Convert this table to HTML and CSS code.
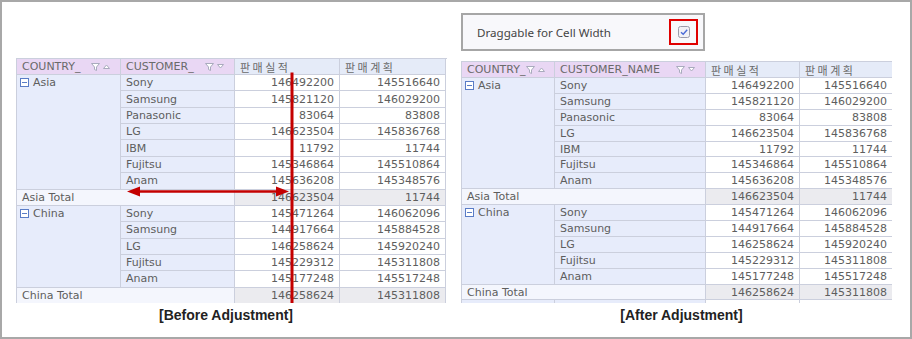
FILE: index.html
```html
<!DOCTYPE html>
<html>
<head>
<meta charset="UTF-8">
<title>Draggable for Cell Width</title>
<link rel="stylesheet" href="styles.css">
</head>
<body>
<div class="frame">
	<div class="panel before">
		<div class="gridWrap">
			<div class="grid left">
				<div class="hd dim">COUNTRY_<span class="icons"><svg class="funnel" viewBox="0 0 9 8"><path d="M0.5 0.5h8L5.5 4v3.5L3.5 6.5V4z"/></svg><svg class="sort" viewBox="0 0 7 5"><path d="M0.5 4.5L3.5 1L6.5 4.5z"/></svg></span></div>
				<div class="hd dim">CUSTOMER_<span class="icons"><svg class="funnel" viewBox="0 0 9 8"><path d="M0.5 0.5h8L5.5 4v3.5L3.5 6.5V4z"/></svg><svg class="sort" viewBox="0 0 7 5"><path d="M0.5 0.5L3.5 4L6.5 0.5z"/></svg></span></div>
				<div class="hd measure">판매실적</div>
				<div class="hd measure">판매계획</div>

				<div class="country asia"><span class="label"><svg class="expand" viewBox="0 0 9 9"><rect x="0.5" y="0.5" width="8" height="8"/><path d="M2 4.5h5"/></svg>Asia</span></div>
				<div class="cust">Sony</div><div class="num">146492200</div><div class="num">145516640</div>
				<div class="cust">Samsung</div><div class="num">145821120</div><div class="num">146029200</div>
				<div class="cust">Panasonic</div><div class="num">83064</div><div class="num">83808</div>
				<div class="cust">LG</div><div class="num">146623504</div><div class="num">145836768</div>
				<div class="cust">IBM</div><div class="num">11792</div><div class="num">11744</div>
				<div class="cust">Fujitsu</div><div class="num">145346864</div><div class="num">145510864</div>
				<div class="cust">Anam</div><div class="num">145636208</div><div class="num">145348576</div>
				<div class="total">Asia Total</div><div class="num sum">146623504</div><div class="num sum">11744</div>

				<div class="country china"><span class="label"><svg class="expand" viewBox="0 0 9 9"><rect x="0.5" y="0.5" width="8" height="8"/><path d="M2 4.5h5"/></svg>China</span></div>
				<div class="cust">Sony</div><div class="num">145471264</div><div class="num">146062096</div>
				<div class="cust">Samsung</div><div class="num">144917664</div><div class="num">145884528</div>
				<div class="cust">LG</div><div class="num">146258624</div><div class="num">145920240</div>
				<div class="cust">Fujitsu</div><div class="num">145229312</div><div class="num">145311808</div>
				<div class="cust">Anam</div><div class="num">145177248</div><div class="num">145517248</div>
				<div class="total">China Total</div><div class="num sum">146258624</div><div class="num sum">145311808</div>
				<div class="country"></div><div class="cust"></div><div class="num"></div><div class="num"></div>
			</div>
			<svg class="marks" viewBox="0 0 431 245">
				<rect x="274.5" y="14.5" width="3" height="231" fill="#c40000"/>
				<path d="M121 133.5H263" stroke="#c40000" stroke-width="2.4"/>
				<path d="M111 133.5L124 128.5V138.5z" fill="#c40000"/>
				<path d="M273 133.5L260 128.5V138.5z" fill="#c40000"/>
			</svg>
		</div>
		<p class="caption">[Before Adjustment]</p>
	</div>

	<div class="panel after">
		<div class="option">
			<span>Draggable for Cell Width</span>
			<span class="highlight"><svg class="check" viewBox="0 0 12 12"><rect x="0.5" y="0.5" width="11" height="11" rx="2"/><path d="M3 6.2L5.2 8.3L9.2 3.8"/></svg></span>
		</div>
		<div class="gridWrap">
			<div class="grid right">
				<div class="hd dim">COUNTRY_<span class="icons"><svg class="funnel" viewBox="0 0 9 8"><path d="M0.5 0.5h8L5.5 4v3.5L3.5 6.5V4z"/></svg><svg class="sort" viewBox="0 0 7 5"><path d="M0.5 4.5L3.5 1L6.5 4.5z"/></svg></span></div>
				<div class="hd dim">CUSTOMER_NAME<span class="icons"><svg class="funnel" viewBox="0 0 9 8"><path d="M0.5 0.5h8L5.5 4v3.5L3.5 6.5V4z"/></svg><svg class="sort" viewBox="0 0 7 5"><path d="M0.5 0.5L3.5 4L6.5 0.5z"/></svg></span></div>
				<div class="hd measure">판매실적</div>
				<div class="hd measure">판매계획</div>

				<div class="country asia"><span class="label"><svg class="expand" viewBox="0 0 9 9"><rect x="0.5" y="0.5" width="8" height="8"/><path d="M2 4.5h5"/></svg>Asia</span></div>
				<div class="cust">Sony</div><div class="num">146492200</div><div class="num">145516640</div>
				<div class="cust">Samsung</div><div class="num">145821120</div><div class="num">146029200</div>
				<div class="cust">Panasonic</div><div class="num">83064</div><div class="num">83808</div>
				<div class="cust">LG</div><div class="num">146623504</div><div class="num">145836768</div>
				<div class="cust">IBM</div><div class="num">11792</div><div class="num">11744</div>
				<div class="cust">Fujitsu</div><div class="num">145346864</div><div class="num">145510864</div>
				<div class="cust">Anam</div><div class="num">145636208</div><div class="num">145348576</div>
				<div class="total">Asia Total</div><div class="num sum">146623504</div><div class="num sum">11744</div>

				<div class="country china"><span class="label"><svg class="expand" viewBox="0 0 9 9"><rect x="0.5" y="0.5" width="8" height="8"/><path d="M2 4.5h5"/></svg>China</span></div>
				<div class="cust">Sony</div><div class="num">145471264</div><div class="num">146062096</div>
				<div class="cust">Samsung</div><div class="num">144917664</div><div class="num">145884528</div>
				<div class="cust">LG</div><div class="num">146258624</div><div class="num">145920240</div>
				<div class="cust">Fujitsu</div><div class="num">145229312</div><div class="num">145311808</div>
				<div class="cust">Anam</div><div class="num">145177248</div><div class="num">145517248</div>
				<div class="total">China Total</div><div class="num sum">146258624</div><div class="num sum">145311808</div>
				<div class="country"></div><div class="cust"></div><div class="num"></div><div class="num"></div>
			</div>
		</div>
		<p class="caption">[After Adjustment]</p>
	</div>
</div>
</body>
</html>
```

FILE: styles.css
```css
* {
	margin: 0;
	padding: 0;
	box-sizing: border-box;
}

body {
	width: 912px;
	height: 339px;
	background: #ffffff;
	font-family: "DejaVu Sans", "Noto Sans CJK KR", sans-serif;
}

.frame {
	width: 912px;
	height: 339px;
	border: 2px solid #a8a8a8;
	display: flex;
	gap: 14px;
	padding-left: 14px;
	overflow: hidden;
}

.panel {
	width: 431px;
	display: flex;
	flex-direction: column;
}

.before {
	padding-top: 56px;
}

.after {
	padding-top: 11px;
}

/* option box */
.option {
	width: 244px;
	height: 38px;
	border: 2px solid #a6a6a6;
	background: #f8f8fb;
	display: flex;
	align-items: center;
	padding-left: 14px;
	font-family: "Noto Sans", sans-serif;
	font-size: 11.6px;
	color: #444;
	margin-bottom: 10px;
}

.highlight {
	margin-left: auto;
	margin-right: 5px;
	width: 29px;
	height: 26px;
	border: 2px solid #e00000;
	display: flex;
	align-items: center;
	justify-content: center;
}

.check {
	width: 12px;
	height: 12px;
}

.check rect {
	fill: #f1f1f6;
	stroke: #9b9baa;
}

.check path {
	fill: none;
	stroke: #4b6bd6;
	stroke-width: 1.4;
}

/* pivot grid */
.gridWrap {
	position: relative;
	overflow: hidden;
}

.before .gridWrap {
	height: 245px;
}

.after .gridWrap {
	height: 242px;
}

.grid {
	display: grid;
	border-top: 1px solid #cbcfdd;
	border-left: 1px solid #cbcfdd;
	font-size: 11px;
	color: #5e5e5e;
}

.left {
	grid-template-columns: 104px 114px 105px 106px;
	grid-template-rows: 16px repeat(15, 16.36px);
}

.right {
	grid-template-columns: 93px 151px 94px 93px;
	grid-template-rows: 16px repeat(15, 15.9px);
}

.grid > div {
	display: flex;
	align-items: center;
	padding: 0 5px;
	border-right: 1px solid #cbcfdd;
	border-bottom: 1px solid #cbcfdd;
	white-space: nowrap;
	overflow: hidden;
}

.hd {
	color: #6a6a6a;
}

.dim {
	background: #e9d7f4;
	justify-content: space-between;
	padding-right: 10px !important;
}

.measure {
	background: #e5ebf8;
	font-family: "Noto Sans CJK KR", sans-serif;
	letter-spacing: 2.5px;
}

.icons {
	display: flex;
	align-items: center;
	gap: 3px;
}

.funnel {
	width: 9px;
	height: 8px;
}

.funnel path,
.sort path {
	fill: #ffffff;
	stroke: #a9abbd;
	stroke-width: 1;
}

.sort {
	width: 7px;
	height: 5px;
}

.country {
	background: #e7ecfb;
	align-items: flex-start !important;
}

.asia {
	grid-row: span 7;
}

.china {
	grid-row: span 5;
}

.label {
	display: flex;
	align-items: center;
	height: 15px;
	gap: 4px;
	margin-left: -2px;
}

.expand {
	width: 9px;
	height: 9px;
}

.expand rect {
	fill: #ffffff;
	stroke: #5a7cc6;
}

.expand path {
	stroke: #5a7cc6;
}

.cust {
	background: #e7ecfb;
}

.num {
	justify-content: flex-end;
	background: #ffffff;
}

.total {
	grid-column: span 2;
	background: #f4f6fd;
}

.sum {
	background: #ebebef;
}

.marks {
	position: absolute;
	left: 0;
	top: 0;
	width: 431px;
	height: 245px;
	pointer-events: none;
}

.caption {
	margin-top: 4px;
	font-family: "Liberation Sans", Arial, sans-serif;
	font-weight: bold;
	font-size: 14px;
	line-height: 16px;
	color: #222;
	text-align: center;
}

.before .caption {
	padding-right: 11px;
}

.after .caption {
	padding-left: 10px;
}
```
